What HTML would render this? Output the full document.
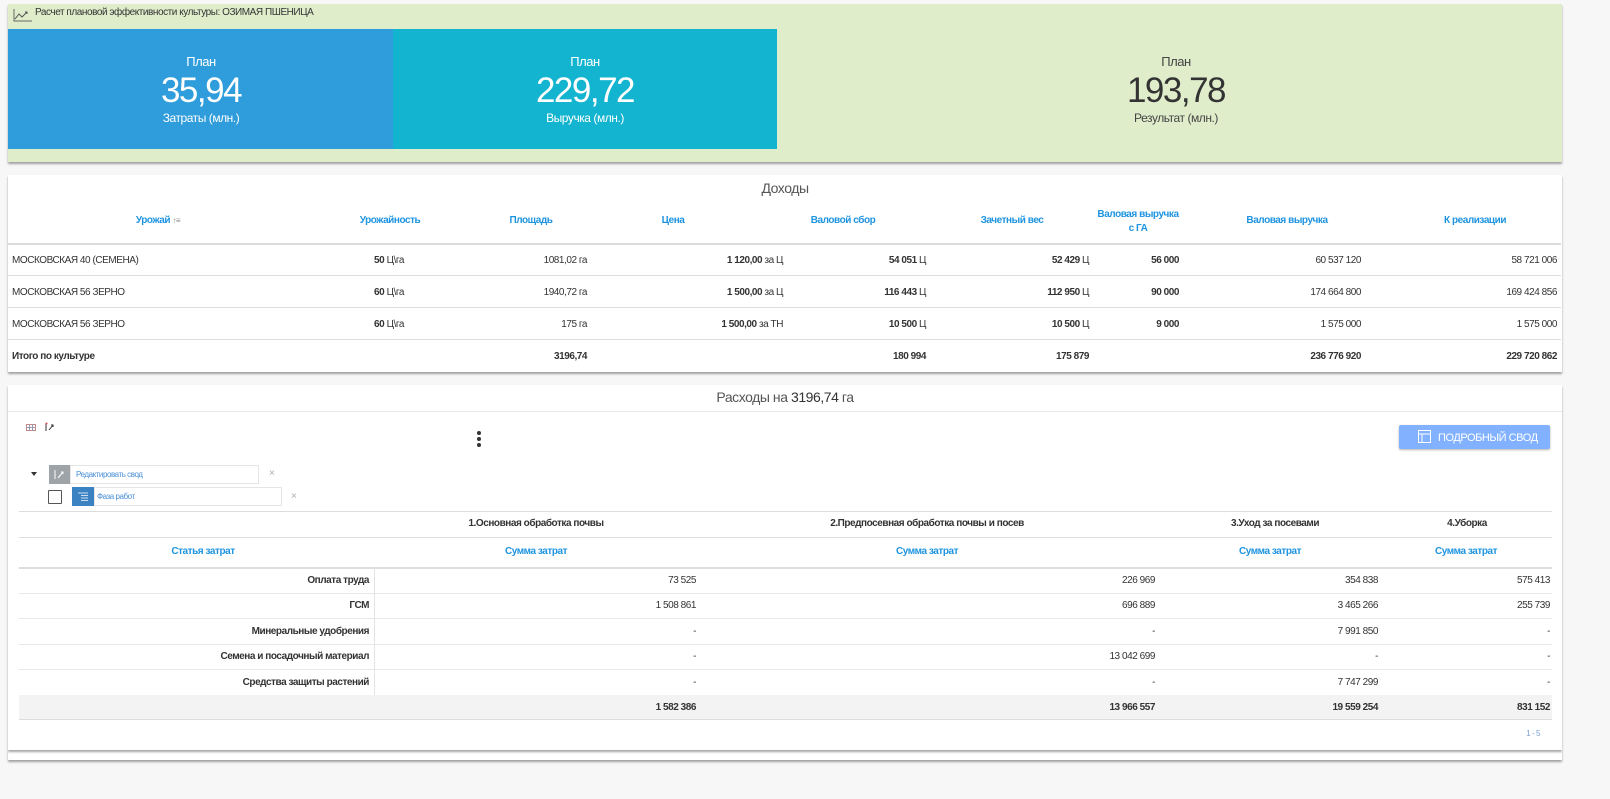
<!DOCTYPE html>
<html><head><meta charset="utf-8"><style>
*{margin:0;padding:0;box-sizing:border-box}
body{width:1610px;height:799px;background:#f7f7f7;font-family:"Liberation Sans",sans-serif;position:relative;overflow:hidden;color:#333}
.t{position:absolute;white-space:nowrap;font-size:10px;line-height:12px;letter-spacing:-0.45px}
.c{transform:translateX(-50%)}
.b{font-weight:bold}
.h{color:#1e94e0;font-weight:bold}
.hl{position:absolute;height:1px;background:#ddd}
.panel{position:absolute;left:8px;width:1554px;background:#fff;box-shadow:0 2px 2px rgba(0,0,0,.35)}
</style></head><body>

<!-- top panel -->
<div class="panel" style="top:4px;height:158px;background:#dfedcb"></div>
<svg style="position:absolute;left:13px;top:8px" width="20" height="14" viewBox="0 0 20 14"><path d="M1 1V13H19" fill="none" stroke="#666" stroke-width="1"/><path d="M2 11L6 6L9 9L14 4M12 4H14V6" fill="none" stroke="#555" stroke-width="1"/></svg>
<div class="t" style="left:35px;top:7px;font-size:10px">Расчет плановой эффективности культуры: ОЗИМАЯ ПШЕНИЦА</div>
<div style="position:absolute;left:8px;top:29px;width:385px;height:120px;background:#2f9cdb"></div>
<div style="position:absolute;left:393px;top:29px;width:384px;height:120px;background:#13b4cf"></div>
<div class="t c" style="left:201px;top:54px;font-size:13px;line-height:15px;color:#fff">План</div>
<div class="t c" style="left:201px;top:72px;font-size:35px;line-height:38px;color:#fff;letter-spacing:-1.5px">35,94</div>
<div class="t c" style="left:201px;top:111px;font-size:12px;line-height:14px;color:#fff">Затраты (млн.)</div>
<div class="t c" style="left:585px;top:54px;font-size:13px;line-height:15px;color:#fff">План</div>
<div class="t c" style="left:585px;top:72px;font-size:35px;line-height:38px;color:#fff;letter-spacing:-1.5px">229,72</div>
<div class="t c" style="left:585px;top:111px;font-size:12px;line-height:14px;color:#fff">Выручка (млн.)</div>
<div class="t c" style="left:1176px;top:54px;font-size:13px;line-height:15px;color:#444">План</div>
<div class="t c" style="left:1176px;top:72px;font-size:35px;line-height:38px;color:#333;letter-spacing:-1.5px">193,78</div>
<div class="t c" style="left:1176px;top:111px;font-size:12px;line-height:14px;color:#444">Результат (млн.)</div>

<!-- income -->
<div class="panel" style="top:175px;height:197px"></div>
<div class="t c" style="left:785px;top:180px;font-size:14px;line-height:16px;color:#555">Доходы</div>
<div class="t h c" style="left:158px;top:215px">Урожай <span style="font-weight:normal;color:#888;font-size:8px">↑≡</span></div>
<div class="t h c" style="left:390px;top:215px">Урожайность</div>
<div class="t h c" style="left:531px;top:215px">Площадь</div>
<div class="t h c" style="left:673px;top:215px">Цена</div>
<div class="t h c" style="left:843px;top:215px">Валовой сбор</div>
<div class="t h c" style="left:1012px;top:215px">Зачетный вес</div>
<div class="t h c" style="left:1138px;top:208px;text-align:center;line-height:14px">Валовая выручка<br>с ГА</div>
<div class="t h c" style="left:1287px;top:215px">Валовая выручка</div>
<div class="t h c" style="left:1475px;top:215px">К реализации</div>
<div class="hl" style="left:8px;width:1553px;top:243px;height:2px"></div>
<div class="hl" style="left:8px;width:1553px;top:275px"></div>
<div class="hl" style="left:8px;width:1553px;top:307px"></div>
<div class="hl" style="left:8px;width:1553px;top:339px"></div>

<div class="t" style="left:12px;top:255px">МОСКОВСКАЯ 40 (СЕМЕНА)</div>
<div class="t" style="left:374px;top:255px"><b>50</b> Ц\га</div>
<div class="t" style="right:1023px;top:255px">1081,02 га</div>
<div class="t" style="right:827px;top:255px"><b>1 120,00</b> за Ц</div>
<div class="t" style="right:684px;top:255px"><b>54 051</b> Ц</div>
<div class="t" style="right:521px;top:255px"><b>52 429</b> Ц</div>
<div class="t b" style="right:431px;top:255px">56 000</div>
<div class="t" style="right:249px;top:255px">60 537 120</div>
<div class="t" style="right:53px;top:255px">58 721 006</div>

<div class="t" style="left:12px;top:287px">МОСКОВСКАЯ 56 ЗЕРНО</div>
<div class="t" style="left:374px;top:287px"><b>60</b> Ц\га</div>
<div class="t" style="right:1023px;top:287px">1940,72 га</div>
<div class="t" style="right:827px;top:287px"><b>1 500,00</b> за Ц</div>
<div class="t" style="right:684px;top:287px"><b>116 443</b> Ц</div>
<div class="t" style="right:521px;top:287px"><b>112 950</b> Ц</div>
<div class="t b" style="right:431px;top:287px">90 000</div>
<div class="t" style="right:249px;top:287px">174 664 800</div>
<div class="t" style="right:53px;top:287px">169 424 856</div>

<div class="t" style="left:12px;top:319px">МОСКОВСКАЯ 56 ЗЕРНО</div>
<div class="t" style="left:374px;top:319px"><b>60</b> Ц\га</div>
<div class="t" style="right:1023px;top:319px">175 га</div>
<div class="t" style="right:827px;top:319px"><b>1 500,00</b> за ТН</div>
<div class="t" style="right:684px;top:319px"><b>10 500</b> Ц</div>
<div class="t" style="right:521px;top:319px"><b>10 500</b> Ц</div>
<div class="t b" style="right:431px;top:319px">9 000</div>
<div class="t" style="right:249px;top:319px">1 575 000</div>
<div class="t" style="right:53px;top:319px">1 575 000</div>

<div class="t b" style="left:12px;top:351px">Итого по культуре</div>
<div class="t b" style="right:1023px;top:351px">3196,74</div>
<div class="t b" style="right:684px;top:351px">180 994</div>
<div class="t b" style="right:521px;top:351px">175 879</div>
<div class="t b" style="right:249px;top:351px">236 776 920</div>
<div class="t b" style="right:53px;top:351px">229 720 862</div>

<!-- expenses -->
<div class="panel" style="top:750px;height:10px"></div>
<div class="panel" style="top:385px;height:365px"></div>
<div class="t c" style="left:785px;top:389px;font-size:14px;line-height:16px;color:#555">Расходы на <span style="color:#333">3196,74</span> га</div>
<div class="hl" style="left:8px;width:1554px;top:411px;background:#e8e8e8"></div>
<svg style="position:absolute;left:26px;top:424px" width="10" height="7"><rect x="0.5" y="0.5" width="9" height="6" fill="none" stroke="#c88"/><path d="M3.5 0V7M6.5 0V7M0 3.5H10" stroke="#99a"/></svg>
<svg style="position:absolute;left:45px;top:422px" width="10" height="10"><path d="M1 1V9M4 8L8 3M6 3H8V5" fill="none" stroke="#333" stroke-width="1"/><circle cx="1.5" cy="1.5" r="1" fill="#d44"/></svg>
<div style="position:absolute;left:477px;top:431px;width:4px;height:4px;border-radius:2px;background:#333;box-shadow:0 6px 0 #333,0 12px 0 #333"></div>
<div style="position:absolute;left:1399px;top:425px;width:151px;height:24px;background:#82b1ff;border-radius:2px;box-shadow:0 1px 2px rgba(0,0,0,.3)"></div>
<svg style="position:absolute;left:1418px;top:430px" width="13" height="13"><rect x="0.5" y="0.5" width="12" height="12" fill="none" stroke="#fff"/><path d="M0 4H13M4 4V13" stroke="#fff"/></svg>
<div class="t" style="left:1438px;top:432px;font-size:11px;color:#fff">ПОДРОБНЫЙ СВОД</div>

<div style="position:absolute;left:31px;top:472px;border-left:3px solid transparent;border-right:3px solid transparent;border-top:4px solid #333"></div>
<div style="position:absolute;left:49px;top:465px;width:21px;height:19px;background:#9ea3a8"></div>
<svg style="position:absolute;left:54px;top:469px" width="11" height="11"><path d="M1 1V10M4 9L9 3M7 3H9V5" fill="none" stroke="#fff"/></svg>
<div style="position:absolute;left:70px;top:465px;width:189px;height:19px;border:1px solid #e5e5e5;background:#fff"></div>
<div class="t" style="left:76px;top:469px;font-size:8px;color:#4a8fd8">Редактировать свод</div>
<div class="t" style="left:269px;top:468px;color:#aaa">×</div>
<div style="position:absolute;left:48px;top:490px;width:14px;height:14px;border:1px solid #555;border-radius:1px"></div>
<div style="position:absolute;left:72px;top:487px;width:22px;height:19px;background:#3a82c2"></div>
<svg style="position:absolute;left:78px;top:492px" width="10" height="9"><path d="M0 1H10M3 3.5H10M3 6H10M3 8.5H10" stroke="#cde" stroke-width="1"/></svg>
<div style="position:absolute;left:94px;top:487px;width:188px;height:19px;border:1px solid #e5e5e5;background:#fff"></div>
<div class="t" style="left:97px;top:491px;font-size:8px;color:#4a8fd8">Фаза работ</div>
<div class="t" style="left:291px;top:491px;color:#aaa">×</div>

<div class="hl" style="left:19px;width:1533px;top:511px"></div>
<div class="t b c" style="left:536px;top:518px">1.Основная обработка почвы</div>
<div class="t b c" style="left:927px;top:518px">2.Предпосевная обработка почвы и посев</div>
<div class="t b c" style="left:1275px;top:518px">3.Уход за посевами</div>
<div class="t b c" style="left:1467px;top:518px">4.Уборка</div>
<div class="hl" style="left:19px;width:1533px;top:537px"></div>
<div class="t h c" style="left:203px;top:546px">Статья затрат</div>
<div class="t h c" style="left:536px;top:546px">Сумма затрат</div>
<div class="t h c" style="left:927px;top:546px">Сумма затрат</div>
<div class="t h c" style="left:1270px;top:546px">Сумма затрат</div>
<div class="t h c" style="left:1466px;top:546px">Сумма затрат</div>
<div class="hl" style="left:19px;width:1533px;top:567px;height:2px"></div>
<div class="hl" style="left:19px;width:1533px;top:593px;background:#e8e8e8"></div>
<div class="hl" style="left:19px;width:1533px;top:618px;background:#e8e8e8"></div>
<div class="hl" style="left:19px;width:1533px;top:644px;background:#e8e8e8"></div>
<div class="hl" style="left:19px;width:1533px;top:669px;background:#e8e8e8"></div>
<div style="position:absolute;left:374px;top:568px;width:1px;height:127px;background:#e3e3e3"></div>
<div style="position:absolute;left:19px;top:695px;width:1533px;height:25px;background:#f3f3f3;border-bottom:1px solid #ddd"></div>

<div class="t b" style="right:1241px;top:575px">Оплата труда</div>
<div class="t" style="right:914px;top:575px">73 525</div>
<div class="t" style="right:455px;top:575px">226 969</div>
<div class="t" style="right:232px;top:575px">354 838</div>
<div class="t" style="right:60px;top:575px">575 413</div>

<div class="t b" style="right:1241px;top:600px">ГСМ</div>
<div class="t" style="right:914px;top:600px">1 508 861</div>
<div class="t" style="right:455px;top:600px">696 889</div>
<div class="t" style="right:232px;top:600px">3 465 266</div>
<div class="t" style="right:60px;top:600px">255 739</div>

<div class="t b" style="right:1241px;top:626px">Минеральные удобрения</div>
<div class="t" style="right:914px;top:626px">-</div>
<div class="t" style="right:455px;top:626px">-</div>
<div class="t" style="right:232px;top:626px">7 991 850</div>
<div class="t" style="right:60px;top:626px">-</div>

<div class="t b" style="right:1241px;top:651px">Семена и посадочный материал</div>
<div class="t" style="right:914px;top:651px">-</div>
<div class="t" style="right:455px;top:651px">13 042 699</div>
<div class="t" style="right:232px;top:651px">-</div>
<div class="t" style="right:60px;top:651px">-</div>

<div class="t b" style="right:1241px;top:677px">Средства защиты растений</div>
<div class="t" style="right:914px;top:677px">-</div>
<div class="t" style="right:455px;top:677px">-</div>
<div class="t" style="right:232px;top:677px">7 747 299</div>
<div class="t" style="right:60px;top:677px">-</div>

<div class="t b" style="right:914px;top:702px">1 582 386</div>
<div class="t b" style="right:455px;top:702px">13 966 557</div>
<div class="t b" style="right:232px;top:702px">19 559 254</div>
<div class="t b" style="right:60px;top:702px">831 152</div>

<div class="t" style="right:70px;top:728px;font-size:8px;color:#7a9fd0">1 - 5</div>
</body></html>
